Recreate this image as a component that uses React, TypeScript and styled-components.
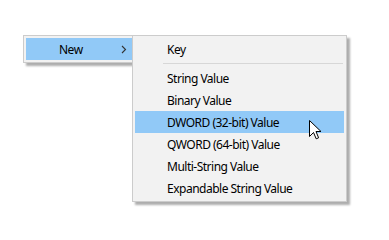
import React from "react";
import styled, { createGlobalStyle } from "styled-components";

const Global = createGlobalStyle`
  html, body { margin: 0; padding: 0; background: #ffffff; }
  body { font-family: "Segoe UI", "Noto Sans", "Liberation Sans", sans-serif; }
`;

const Stage = styled.div`
  position: relative;
  width: 389px;
  height: 240px;
  padding: 35px 0 0 23px;
  box-sizing: border-box;
`;

const MenuBox = styled.div<{ $width: number }>`
  width: ${(p) => p.$width}px;
  box-sizing: border-box;
  background: #f2f2f2;
  border: 1px solid #cccccc;
  padding: 2px;
  display: flex;
  flex-direction: column;
  box-shadow: 3px 3px 2px rgba(0, 0, 0, 0.32);
`;

const SubMenu = styled(MenuBox)`
  position: absolute;
  left: 132px;
  top: 35px;
  z-index: 2;
`;

const Item = styled.div<{ $active?: boolean; $indent: number }>`
  position: relative;
  height: 22px;
  display: flex;
  align-items: center;
  padding-left: ${(p) => p.$indent}px;
  background: ${(p) => (p.$active ? "#91c9f7" : "transparent")};
  font-family: "Noto Sans", "Liberation Sans", sans-serif;
  font-size: 12px;
  letter-spacing: -0.5px;
  color: #000000;
  white-space: nowrap;
`;

const Arrow = styled.span`
  position: absolute;
  right: 18px;
  top: 7px;
  width: 6px;
  height: 9px;
  display: flex;
`;

const Separator = styled.div`
  height: 1px;
  margin: 3px 1px 3px 28px;
  background: #d7d7d7;
`;

const Cursor = styled.svg`
  position: absolute;
  left: 308px;
  top: 119px;
  z-index: 3;
`;

const subItems = [
  "String Value",
  "Binary Value",
  "DWORD (32-bit) Value",
  "QWORD (64-bit) Value",
  "Multi-String Value",
  "Expandable String Value",
];

export default function App() {
  return (
    <>
      <Global />
      <Stage>
        <MenuBox $width={125}>
          <Item $active $indent={33}>
            New
            <Arrow>
              <svg width="6" height="9" viewBox="0 0 6 9">
                <path d="M1 1 L4.5 4.5 L1 8" fill="none" stroke="#333" strokeWidth="1.1" />
              </svg>
            </Arrow>
          </Item>
        </MenuBox>
        <SubMenu $width={215}>
          <Item $indent={32}>Key</Item>
          <Separator />
          {subItems.map((t) => (
            <Item key={t} $indent={32} $active={t.startsWith("DWORD")}>
              {t}
            </Item>
          ))}
        </SubMenu>
        <Cursor width="14" height="22" viewBox="0 0 14 22">
          <path
            d="M1.5 1.5 L1.5 17.5 L5.5 13.5 L8.2 19.8 L10.6 18.8 L8 12.5 L13 12.5 Z"
            fill="#ffffff"
            stroke="#000000"
            strokeWidth="1"
            strokeLinejoin="miter"
          />
        </Cursor>
      </Stage>
    </>
  );
}
